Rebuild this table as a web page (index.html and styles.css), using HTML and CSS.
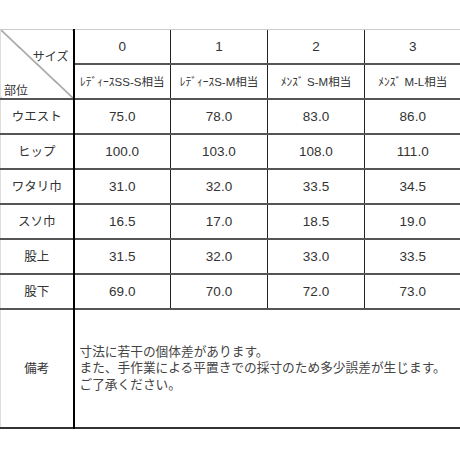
FILE: index.html
```html
<!DOCTYPE html>
<html lang="ja">
<head>
<meta charset="utf-8">
<link rel="stylesheet" href="styles.css">
</head>
<body>
<table class="size-table">
  <colgroup>
    <col class="c-label">
    <col class="c-size">
    <col class="c-size">
    <col class="c-size">
    <col class="c-size">
  </colgroup>
  <tr class="row-head">
    <th class="corner" rowspan="2">
      <div class="corner-box">
        <span class="corner-top">サイズ</span>
        <span class="corner-bottom">部位</span>
      </div>
    </th>
    <th class="num">0</th>
    <th class="num">1</th>
    <th class="num">2</th>
    <th class="num">3</th>
  </tr>
  <tr class="row-sub">
    <th class="sub">ﾚﾃﾞｨｰｽSS-S相当</th>
    <th class="sub">ﾚﾃﾞｨｰｽS-M相当</th>
    <th class="sub">ﾒﾝｽﾞ S-M相当</th>
    <th class="sub">ﾒﾝｽﾞ M-L相当</th>
  </tr>
  <tr><th class="label">ウエスト</th><td>75.0</td><td>78.0</td><td>83.0</td><td>86.0</td></tr>
  <tr><th class="label">ヒップ</th><td>100.0</td><td>103.0</td><td>108.0</td><td>111.0</td></tr>
  <tr><th class="label">ワタリ巾</th><td>31.0</td><td>32.0</td><td>33.5</td><td>34.5</td></tr>
  <tr><th class="label">スソ巾</th><td>16.5</td><td>17.0</td><td>18.5</td><td>19.0</td></tr>
  <tr><th class="label">股上</th><td>31.5</td><td>32.0</td><td>33.0</td><td>33.5</td></tr>
  <tr><th class="label">股下</th><td>69.0</td><td>70.0</td><td>72.0</td><td>73.0</td></tr>
  <tr class="row-note">
    <th class="label">備考</th>
    <td class="note" colspan="4">寸法に若干の個体差があります。<br>また、手作業による平置きでの採寸のため多少誤差が生じます。<br>ご了承ください。</td>
  </tr>
</table>
</body>
</html>
```

FILE: styles.css
```css
html, body {
  margin: 0;
  background: #ffffff;
}

body {
  padding-top: 29px;
  font-family: "Liberation Sans", "Noto Sans CJK JP", sans-serif;
  color: #333333;
}

.size-table {
  border-collapse: collapse;
  table-layout: fixed;
  width: 460px;
  border-top: 1px solid #cccccc;
  border-left: 1px solid #dddddd;
  border-right: 2px solid #111111;
  border-bottom: 2px solid #333333;
}

.c-label { width: 73px; }
.c-size { width: 97px; }

.size-table th,
.size-table td {
  padding: 0;
  height: 33px;
  text-align: center;
  vertical-align: middle;
  font-weight: normal;
  font-size: 13.5px;
  line-height: 16px;
  color: #333333;
  border-top: 2px solid #555555;
  border-left: 1px solid #222222;
}

.size-table tr.row-head th {
  border-top: 1px solid #cccccc;
}

.size-table .label,
.size-table .corner {
  border-left: 1px solid #dddddd;
  border-right: 2px solid #000000;
  font-size: 12.5px;
}

.size-table .sub {
  font-size: 11.5px;
  white-space: nowrap;
  letter-spacing: 0;
}

.corner {
  background: linear-gradient(to top right, transparent calc(50% - 0.8px), #444444 50%, transparent calc(50% + 0.8px));
}

.corner-box {
  display: flex;
  flex-direction: column;
  height: 68px;
  font-size: 12px;
}

.corner-top {
  align-self: flex-end;
  padding-top: 19px;
  padding-right: 4px;
}

.corner-bottom {
  align-self: flex-start;
  padding-top: 18px;
  padding-left: 3px;
}

.size-table .row-note th,
.size-table .row-note td {
  height: 117px;
}

.size-table .note {
  text-align: left;
  padding-left: 5px;
  font-size: 12.7px;
  line-height: 16.5px;
  color: #444444;
}
```
